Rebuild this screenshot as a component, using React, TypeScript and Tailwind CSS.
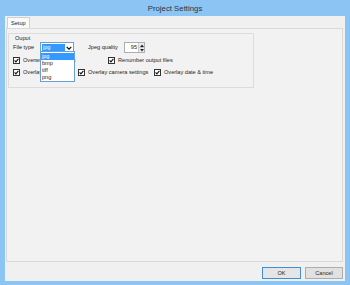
import React from "react";

function Check({ className = "" }: { className?: string }) {
  return (
    <div className={"w-[7px] h-[7px] bg-white border border-[#333] flex items-center justify-center shrink-0 " + className}>
      <svg width="5" height="5" viewBox="0 0 5 5">
        <path d="M0.6 2.4 L1.9 3.8 L4.4 0.8" fill="none" stroke="#111" strokeWidth="1.1" />
      </svg>
    </div>
  );
}

export default function App() {
  return (
    <div
      className="w-[350px] h-[285px] bg-[#8cc5f4] flex flex-col text-[#1e1e1e]"
      style={{ fontFamily: '"Liberation Sans", Arial, sans-serif' }}
    >
      <div className="h-[16px] flex items-center justify-center text-[7.8px] text-[#2c3440] pt-[1px]">
        Project Settings
      </div>
      <div className="mx-[5px] mb-[4px] flex-1 bg-[#f0f0f0] flex flex-col">
        {/* tabs */}
        <div className="flex pl-[2px] pt-[1px]">
          <div className="h-[11px] px-[3px] border border-b-0 border-[#d0d0d0] bg-[#fafafa] text-[5.6px] flex items-center">
            Setup
          </div>
        </div>
        <div className="ml-[1px] mr-[2px] h-[234px] border border-[#d9d9d9] bg-[#f2f2f2] relative">
          <div className="ml-[1px] mt-[4px] w-[246px] h-[55px] border border-[#dcdcdc] pl-[4px] relative">
            <div className="text-[5.6px] mt-[1px] ml-[2px] leading-[6px]">Ouput</div>
            {/* row 1 */}
            <div className="flex items-center mt-[1px] h-[11px] text-[5.6px]">
              <div className="w-[27px]">File type</div>
              <div className="w-[34px] h-[11px] bg-white border border-[#6a9fd6] flex items-center pl-[1px]">
                <div className="bg-[#3399ff] text-white h-[7px] w-[23px] leading-[7px] pl-[1px]">jpg</div>
                <div className="flex-1 flex items-center justify-center">
                  <svg width="6" height="4" viewBox="0 0 6 4">
                    <path d="M0.7 0.8 L3 3.2 L5.3 0.8" fill="none" stroke="#111" strokeWidth="1.2" />
                  </svg>
                </div>
              </div>
              <div className="ml-[14px] w-[36px]">Jpeg quality</div>
              <div className="w-[21px] h-[11px] bg-white border border-[#abadb3] flex items-center">
                <div className="flex-1 text-right pr-[1px]">95</div>
                <div className="w-[6px] h-full flex flex-col border-l border-[#c8c8c8]">
                  <div className="flex-1 bg-[#ececec] flex items-center justify-center border-b border-[#c8c8c8]">
                    <svg width="4" height="3" viewBox="0 0 4 3"><path d="M0 3 L2 0.5 L4 3Z" fill="#222" /></svg>
                  </div>
                  <div className="flex-1 bg-[#ececec] flex items-center justify-center">
                    <svg width="4" height="3" viewBox="0 0 4 3"><path d="M0 0 L2 2.5 L4 0Z" fill="#222" /></svg>
                  </div>
                </div>
              </div>
            </div>
            {/* row 2 */}
            <div className="flex items-center mt-[4px] h-[7px] text-[5.6px]">
              <Check />
              <div className="ml-[3px] w-[85px]">Overwrite output files</div>
              <Check />
              <div className="ml-[3px]">Renumber output files</div>
            </div>
            {/* row 3 */}
            <div className="flex items-center mt-[5px] h-[7px] text-[5.6px]">
              <Check />
              <div className="ml-[3px] w-[55px] overflow-hidden whitespace-nowrap">Overlay filename</div>
              <Check />
              <div className="ml-[3px] w-[66px]">Overlay camera settings</div>
              <Check />
              <div className="ml-[3px]">Overlay date &amp; time</div>
            </div>
            {/* dropdown list */}
            <div className="absolute left-[31px] top-[17px] w-[35px] h-[31px] bg-white border border-[#6a9fd6] text-[5.6px] leading-[7px] pt-[1px]">
              <div className="bg-[#3399ff] text-white pl-[1px]">jpg</div>
              <div className="pl-[1px]">bmp</div>
              <div className="pl-[1px]">tiff</div>
              <div className="pl-[1px]">png</div>
            </div>
          </div>
        </div>
        <div className="flex justify-end gap-[4px] mt-[5px] pr-[2px] text-[5.6px]">
          <div className="w-[39px] h-[12px] border border-[#3c8fd8] bg-[#e5e5e5] flex items-center justify-center">OK</div>
          <div className="w-[38px] h-[12px] border border-[#adadad] bg-[#e1e1e1] flex items-center justify-center">Cancel</div>
        </div>
      </div>
    </div>
  );
}
